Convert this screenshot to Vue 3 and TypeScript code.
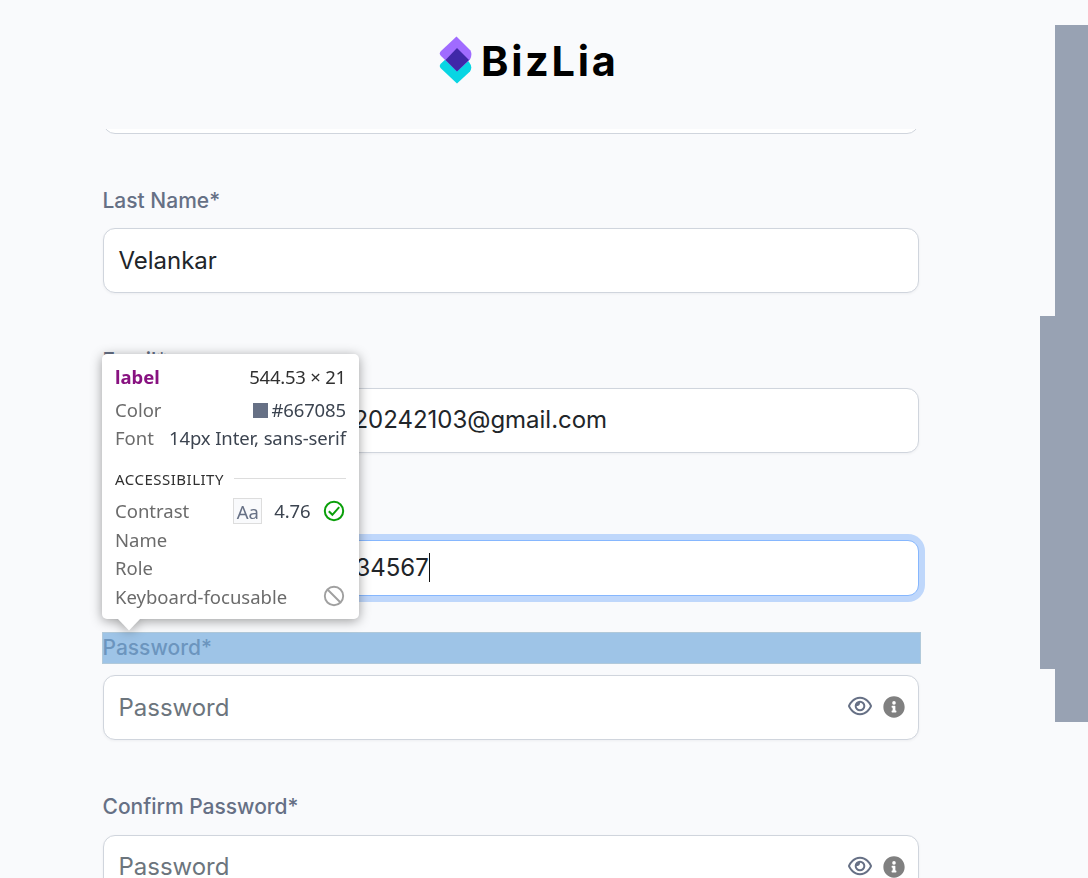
<script setup lang="ts">
interface Field {
  id: string
  label: string
  value?: string
  placeholder?: string
  secret?: boolean
}

const before: Field[] = [
  { id: 'last', label: 'Last Name*', value: 'Velankar' },
  { id: 'email', label: 'Email*', value: '20242103@gmail.com' },
]
const after: Field[] = [
  { id: 'password', label: 'Password*', placeholder: 'Password', secret: true },
  { id: 'confirm', label: 'Confirm Password*', placeholder: 'Password', secret: true },
]
</script>

<template>
  <main class="page">
    <header class="brand">
      <svg class="mark" width="34" height="48" viewBox="0 0 34 48">
        <path d="M2 27.500Q-.5 30 2 32.500L18 47.500L31 35.500Q34 31 30 26L17.500 13Z" fill="#08d5e3" />
        <path d="M17.500.5L31.500 14.500Q33.500 19 31 23.500L18 35.500L2 20Q-.5 17.500 2 15Z" fill="#a06bff" />
        <path d="M18 12L30 24L18 35.500L6.500 24Z" fill="#4028a8" />
      </svg>
      <span class="wordmark">BizLia</span>
    </header>

    <form class="form">
      <div class="cut"></div>
      <div v-for="f in before" :key="f.id" class="field" :class="f.id">
        <label>{{ f.label }}</label>
        <div class="box"><span class="val">{{ f.value }}</span></div>
      </div>

      <div class="box phone"><span class="val">34567</span><i class="caret"></i></div>

      <div v-for="f in after" :key="f.id" class="field" :class="f.id">
        <label>{{ f.label }}</label>
        <div class="box">
          <span class="hint">{{ f.placeholder }}</span>
          <svg class="eye" width="24" height="22" viewBox="0 0 576 512">
            <path fill="#667085" d="M288 80c-65.200 0-118.800 29.600-159.900 67.700C89.600 183.500 63 226 49.400 256c13.600 30 40.200 72.500 78.600 108.300C169.200 402.400 222.800 432 288 432s118.800-29.600 159.900-67.700C486.400 328.500 513 286 526.600 256c-13.600-30-40.200-72.500-78.600-108.300C406.800 109.600 353.200 80 288 80zM95.400 112.600C142.500 68.800 207.200 32 288 32s145.500 36.800 192.600 80.600c46.800 43.500 78.100 95.400 93 131.100 3.300 7.900 3.300 16.700 0 24.600-14.900 35.700-46.200 87.700-93 131.100C433.500 443.200 368.800 480 288 480s-145.500-36.800-192.600-80.600C48.600 356 17.300 304 2.500 268.300c-3.300-7.900-3.300-16.700 0-24.600C17.300 208 48.600 156 95.400 112.600zM288 336c44.200 0 80-35.800 80-80s-35.800-80-80-80c-.7 0-1.300 0-2 0 1.300 5.100 2 10.500 2 16 0 35.300-28.700 64-64 64-5.500 0-10.900-.7-16-2 0 .7 0 1.300 0 2 0 44.200 35.800 80 80 80zm0-208a128 128 0 1 1 0 256 128 128 0 1 1 0-256z" />
          </svg>
          <svg class="info" width="22" height="22" viewBox="0 0 512 512">
            <path fill="#808080" d="M256 8C119 8 8 119 8 256s111 248 248 248 248-111 248-248S393 8 256 8zm0 110a42 42 0 1 1 0 84 42 42 0 0 1 0-84zm56 254c0 6.600-5.400 12-12 12h-88c-6.600 0-12-5.400-12-12v-24c0-6.600 5.400-12 12-12h12v-64h-12c-6.600 0-12-5.400-12-12v-24c0-6.600 5.400-12 12-12h64c6.600 0 12 5.400 12 12v100h12c6.600 0 12 5.400 12 12z" />
          </svg>
        </div>
      </div>
    </form>

    <div class="highlight"></div>

    <div class="side">
      <div class="block"></div>
      <div class="block wide"></div>
      <div class="block last-block"></div>
    </div>

    <aside class="tip">
      <div class="row r1"><b>label</b><span class="dim">544.53 × 21</span></div>
      <div class="row"><span>Color</span><span class="v"><i class="swatch"></i>#667085</span></div>
      <div class="row font-row"><span>Font</span><span class="v">14px Inter, sans-serif</span></div>
      <div class="section"><span>ACCESSIBILITY</span><i></i></div>
      <div class="row contrast">
        <span>Contrast</span>
        <span class="v group">
          <span class="aa">Aa</span><span class="ratio">4.76</span>
          <svg width="22" height="22" viewBox="0 0 22 22" fill="none" stroke="#0a9f0a" stroke-width="2">
            <circle cx="11" cy="11" r="9.200" /><path d="M5.800 11.200L9.400 14.800L16.200 7.200" />
          </svg>
        </span>
      </div>
      <div class="row"><span>Name</span></div>
      <div class="row"><span>Role</span></div>
      <div class="row keyboard">
        <span>Keyboard-focusable</span>
        <svg width="22" height="22" viewBox="0 0 22 22" fill="none" stroke="#a0a0a0" stroke-width="1.900">
          <circle cx="11" cy="11" r="9.200" /><path d="M4.500 4.500L17.500 17.500" />
        </svg>
      </div>
      <svg class="arrow" width="24" height="13" viewBox="0 0 24 13"><path d="M0 0H24L12 12.500Z" fill="#fff" /></svg>
    </aside>
  </main>
</template>

<style>
body { margin: 0; background: #f9fafc; }
</style>

<style scoped>
* { box-sizing: border-box; }
.page {
  position: relative;
  width: 1088px;
  height: 878px;
  overflow: hidden;
  background: #f9fafc;
  font-family: Inter, sans-serif;
}
.brand {
  height: 129px;
  padding: 36px 0 0 439px;
  display: flex;
  align-items: flex-start;
}
.wordmark {
  margin-left: 8px;
  font: 700 41.500px/50px Inter, sans-serif;
  font-feature-settings: 'ss07' 0, 'ss08' 1;
  letter-spacing: 2.7px;
  color: #000;
}
.form {
  width: 816px;
  height: 749px;
  margin-left: 103px;
}
.cut {
  height: 6px;
  margin-bottom: 50px;
  overflow: hidden;
}
.cut::before {
  content: '';
  display: block;
  box-sizing: border-box;
  height: 65px;
  margin-top: -60px;
  border: 1px solid #d0d5dd;
  border-radius: 12px;
  background: #fff;
}
.field { height: 108px; margin-bottom: 52px; }
.field label {
  display: block;
  height: 32px;
  margin: 0 0 11px -0.5px;
  font-size: 21px;
  line-height: 32px;
  font-weight: 480;
  color: #667085;
  white-space: nowrap;
}
.box {
  display: flex;
  align-items: center;
  height: 65px;
  padding: 0 13px 0 14.500px;
  border: 1px solid #d0d5dd;
  border-radius: 12px;
  background: #fff;
  box-shadow: 0 1px 3px rgba(16, 24, 40, 0.05);
  font-size: 24px;
  font-weight: 370;
  letter-spacing: -0.02px;
  color: #212529;
}
.email .val { margin-left: 235px; margin-top: -2px; }
.field.email { margin-bottom: 87px; }
.phone {
  width: 716px;
  height: 56px;
  margin: 0 0 36px 100px;
  border-color: #86b7fe;
  border-radius: 11px;
  box-shadow: 0 0 0 6px #bfd7fb;
}
.phone .val { margin-left: 137px; margin-top: -2px; }
.caret { width: 1px; height: 29px; margin-top: -1px; background: #111; }
.hint { flex: 1; color: #6c757d; }
.eye { margin-right: 11px; margin-top: -4px; }
.info { margin-top: -2px; }
.field.password { margin-bottom: 51px; }
.confirm label { margin-bottom: 12px; }
.confirm .hint { margin-top: -2px; }
.highlight {
  position: absolute;
  left: 102px;
  top: 632px;
  width: 819px;
  height: 32px;
  background: rgba(111, 168, 220, 0.66);
  border: 1px solid rgba(190, 205, 210, 0.6);
}
.side {
  position: absolute;
  right: 0;
  top: 25px;
  display: flex;
  flex-direction: column;
  align-items: flex-end;
}
.block { width: 33px; height: 291px; background: #98a2b3; }
.block.wide { width: 48px; height: 353px; }
.block.last-block { height: 53px; }
.tip {
  position: absolute;
  left: 102px;
  top: 354px;
  width: 257px;
  height: 265px;
  padding: 9px 13px 0;
  border-radius: 5px;
  background: #fff;
  filter: drop-shadow(0 2px 6px rgba(0, 0, 0, 0.38));
  font: 370 18.500px/28.500px 'Noto Sans', sans-serif;
  color: #6b6b6b;
}
.row {
  display: flex;
  justify-content: space-between;
  align-items: center;
  height: 28.500px;
  white-space: nowrap;
}
.row svg { margin-right: 1px; }
.r1 { height: 33px; align-items: flex-start; }
b { color: #881280; }
.dim { color: #303030; letter-spacing: -0.22px; }
.v { color: #3c4450; display: flex; align-items: center; letter-spacing: -0.12px; }
.font-row span { margin-top: -2px; }
.swatch { width: 15px; height: 15px; margin-right: 3px; background: #667085; }
.section {
  display: flex;
  align-items: center;
  gap: 10px;
  height: 52px;
  font-size: 15px;
  font-weight: 400;
  letter-spacing: 0.5px;
  color: #303030;
}
.section i { flex: 1; height: 1px; margin-top: -2px; background: #ddd; }
.contrast { margin-top: -8px; }
.aa {
  width: 29px;
  height: 26px;
  border: 1px solid #ddd;
  background: #f9fafc;
  color: #667085;
  line-height: 25px;
  text-align: center;
}
.ratio { margin: 0 12.500px 0 12px; }
.keyboard svg { margin-top: -2px; }
.arrow { position: absolute; left: 15px; top: 264px; }
</style>
